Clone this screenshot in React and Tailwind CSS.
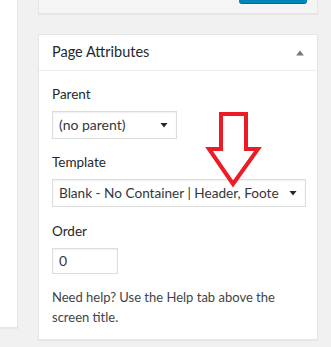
import React from 'react';

const font = { fontFamily: 'Lato, "Open Sans", sans-serif' };

function Caret() {
  return (
    <svg width="8" height="6" viewBox="0 0 8 6" className="shrink-0">
      <path d="M0.5 1 L7.5 1 L4 5.5 Z" fill="#23282d" />
    </svg>
  );
}

function FakeSelect({ value, className, textClass = 'text-[14px]' }) {
  return (
    <div
      className={`flex items-center h-[28px] bg-white border border-[#ddd] shadow-[inset_0_1px_2px_rgba(0,0,0,0.07)] pl-[6px] pr-[8px] gap-2 ${className}`}
    >
      <span className={`flex-1 overflow-hidden whitespace-nowrap text-[#32373c] ${textClass}`}>{value}</span>
      <Caret />
    </div>
  );
}

export default function App() {
  return (
    <div className="relative w-[331px] h-[347px] bg-[#f1f1f1] overflow-hidden flex items-start" style={font}>
      {/* Left column edge */}
      <div className="w-[18px] h-[328px] bg-white border-r border-b border-[#e5e5e5] shadow-[0_1px_1px_rgba(0,0,0,0.04)]" />

      {/* Sidebar */}
      <div className="ml-[20px] w-[280px] flex flex-col">
        {/* Publish box footer */}
        <div className="h-[14px] bg-[#f5f5f5] border-x border-b border-[#e5e5e5] shadow-[0_1px_1px_rgba(0,0,0,0.04)] flex justify-end pr-[10px]">
          <div className="w-[68px] h-[4px] bg-[#0085ba] border-b border-[#006799] rounded-b-[3px]" />
        </div>

        {/* Page Attributes */}
        <div className="mt-[20px] h-[306px] bg-white border border-[#e5e5e5] shadow-[0_1px_1px_rgba(0,0,0,0.04)] flex flex-col">
          <div className="h-[36px] border-b border-[#eee] flex items-center justify-between pl-[13px] pr-[13px]">
            <h2 className="text-[14.5px] text-[#23282d] leading-none">Page Attributes</h2>
            <svg width="8" height="6" viewBox="0 0 8 6">
              <path d="M4 0.5 L7.8 5.5 L0.2 5.5 Z" fill="#72777c" />
            </svg>
          </div>

          <div className="flex flex-col px-[13px] pt-[13px] text-[13.5px] text-[#444] leading-[20px]">
            <p className="text-[#23282d]">Parent</p>
            <FakeSelect value="(no parent)" className="mt-[7px] w-[125px]" />

            <p className="mt-[13px] text-[#23282d]">Template</p>
            <FakeSelect
              value="Blank - No Container | Header, Footer"
              className="mt-[7px] w-[254px] pr-[7px] gap-[10px]"
              textClass="text-[13.6px]"
            />

            <p className="mt-[14px] text-[#23282d]">Order</p>
            <div className="mt-[7px] w-[66px] h-[26px] bg-white border border-[#ddd] shadow-[inset_0_1px_2px_rgba(0,0,0,0.07)] flex items-center pl-[6px] text-[14px] text-[#32373c]">
              0
            </div>

            <p className="mt-[13px] w-[250px] text-[13px]">Need help? Use the Help tab above the screen title.</p>
          </div>
        </div>
      </div>

      {/* Red annotation arrow */}
      <svg className="absolute left-[205px] top-[110px]" width="58" height="80" viewBox="205 110 58 80">
        <path
          d="M221 114 L246 114 L246 149 L258 149 L233 184 L209 149 L221 149 Z"
          fill="none"
          stroke="#ed1c24"
          strokeWidth="4"
          strokeLinejoin="miter"
        />
      </svg>
    </div>
  );
}
